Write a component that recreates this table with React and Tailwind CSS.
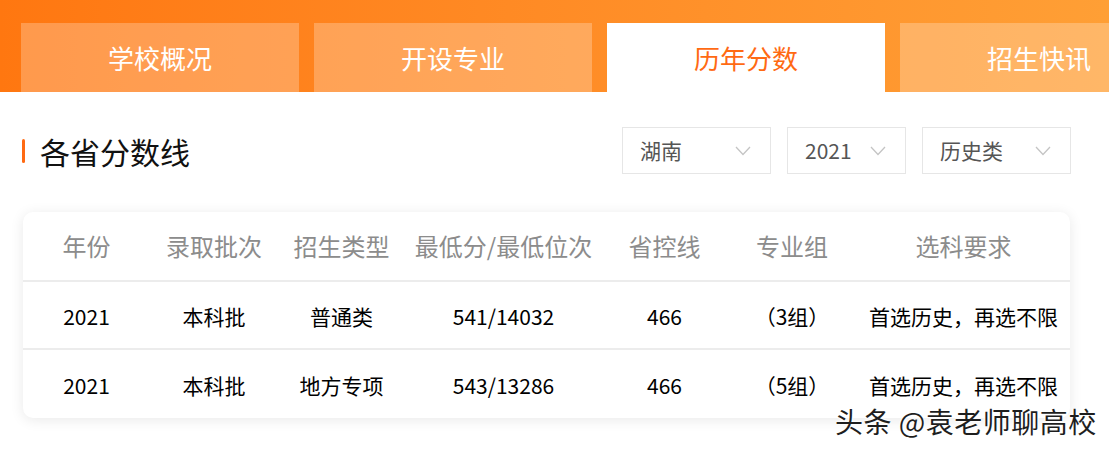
import React from 'react'

const font = { fontFamily: '"Noto Sans CJK SC", "Noto Sans", sans-serif' }

const tabs = ['学校概况', '开设专业', '历年分数', '招生快讯']
const active = 2

const cols = [
  { label: '年份', w: 'w-[127px]' },
  { label: '录取批次', w: 'w-[128px]' },
  { label: '招生类型', w: 'w-[127px]' },
  { label: '最低分/最低位次', w: 'w-[197px]' },
  { label: '省控线', w: 'w-[125px]' },
  { label: '专业组', w: 'w-[130px]' },
  { label: '选科要求', w: 'flex-1' },
]

const rows = [
  ['2021', '本科批', '普通类', '541/14032', '466', '（3组）', '首选历史，再选不限'],
  ['2021', '本科批', '地方专项', '543/13286', '466', '（5组）', '首选历史，再选不限'],
]

function Chevron() {
  return (
    <svg width="16" height="10" viewBox="0 0 16 10" fill="none">
      <polyline points="1,1 8,8.5 15,1" stroke="#c4c4c4" strokeWidth="1.3" />
    </svg>
  )
}

function Select({ value, w }) {
  return (
    <div className={`${w} h-[47px] border border-[#e6e6e6] flex items-center justify-between pl-[17px] pr-[19px]`}>
      <span className="text-[21px] text-[#555]">{value}</span>
      <Chevron />
    </div>
  )
}

export default function App() {
  return (
    <div className="relative w-[1109px] h-[450px] bg-white overflow-hidden" style={font}>
      {/* tab band */}
      <div className="h-[92px] bg-gradient-to-r from-[#ff7710] to-[#ff9f35] pt-[23px] pl-[21px] flex gap-[15px]">
        {tabs.map((t, i) => (
          <div
            key={t}
            className={`w-[278px] h-[69px] shrink-0 flex items-center justify-center text-[26px] ${
              i === active ? 'bg-white text-[#ff6a13]' : 'bg-white/25 text-white'
            }`}
          >
            {t}
          </div>
        ))}
      </div>

      {/* heading + filters */}
      <div className="mt-[35px] pl-[22px] pr-[38px] h-[47px] flex items-center justify-between">
        <div className="flex items-center gap-[15px]">
          <div className="w-[3px] h-[24px] bg-[#ff6a13] rounded-full" />
          <span className="text-[30px] text-[#111] leading-none">各省分数线</span>
        </div>
        <div className="flex gap-[16px]">
          <Select value="湖南" w="w-[149px]" />
          <Select value="2021" w="w-[119px]" />
          <Select value="历史类" w="w-[149px]" />
        </div>
      </div>

      {/* table card */}
      <div className="mt-[38px] ml-[23px] w-[1047px] bg-white rounded-[10px] shadow-[0_2px_14px_rgba(0,0,0,0.09)]">
        <div className="h-[70px] flex items-center border-b-2 border-[#ececec]">
          {cols.map((c) => (
            <div key={c.label} className={`${c.w} shrink-0 text-center text-[24px] text-[#8c8c8c]`}>
              {c.label}
            </div>
          ))}
        </div>
        {rows.map((r, ri) => (
          <div
            key={ri}
            className={`h-[68px] flex items-center pt-[3px] ${ri === 0 ? 'border-b-2 border-[#ececec]' : ''}`}
          >
            {r.map((v, ci) => (
              <div key={ci} className={`${cols[ci].w} shrink-0 text-center text-[21px] text-black`}>
                {v}
              </div>
            ))}
          </div>
        ))}
      </div>

      {/* watermark */}
      <div className="absolute left-[835px] top-[400px] text-[28px] tracking-[0.5px] text-[#1e1e1e] whitespace-nowrap [text-shadow:0_0_2px_#fff,0_0_2px_#fff,0_0_3px_#fff,0_0_3px_#fff]">
        头条 @袁老师聊高校
      </div>
    </div>
  )
}
